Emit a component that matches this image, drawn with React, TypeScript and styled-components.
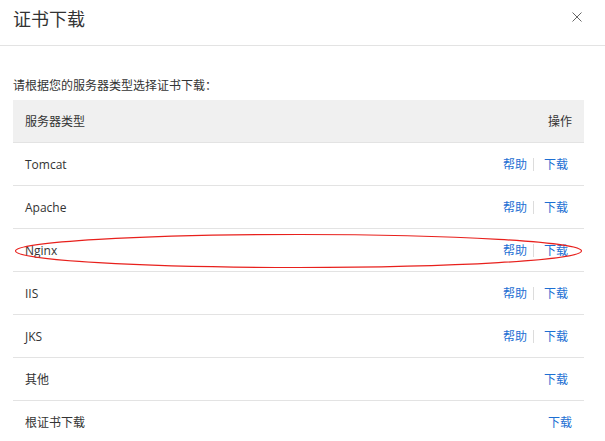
import styled, { createGlobalStyle } from "styled-components";

const GlobalStyle = createGlobalStyle`
  html, body {
    margin: 0;
    padding: 0;
    background: #fff;
    overflow: hidden;
  }
  body {
    font-family: "Open Sans", "Noto Sans CJK SC", sans-serif;
    color: #333;
  }
`

const Dialog = styled.div`
  position: relative;
  width: 605px;
  height: 441px;
  background: #fff;
`

const Header = styled.div`
  display: flex;
  align-items: center;
  justify-content: space-between;
  height: 45px;
  padding: 0 22px 0 13px;
  border-bottom: 1px solid #e3e3e3;
  box-sizing: border-box;
  height: 46px;
`

const Title = styled.h2`
  margin: 0 0 10px 0;
  font-weight: normal;
  font-size: 18px;
  line-height: 24px;
  color: #333;
  font-family: "Noto Sans CJK SC", sans-serif;
`

const Close = styled.button`
  display: flex;
  align-items: center;
  justify-content: center;
  width: 12px;
  height: 12px;
  margin-bottom: 12px;
  padding: 0;
  border: 0;
  background: none;
  cursor: pointer;
`

const Body = styled.div`
  padding: 31px 21px 0 13px;
`

const Hint = styled.p`
  margin: 0 0 5px 0;
  font-size: 12px;
  line-height: 18px;
  color: #333;
`

const Table = styled.div`
  display: flex;
  flex-direction: column;
`

const Row = styled.div<{ $head?: boolean }>`
  display: flex;
  align-items: center;
  justify-content: space-between;
  height: 43px;
  box-sizing: border-box;
  padding: 0 12px;
  border-bottom: 1px solid #e3e3e3;
  background: ${p => (p.$head ? "#f0f0f0" : "#fff")};
  font-size: 12px;
  color: #333;
`

const Actions = styled.div<{ $inset?: boolean }>`
  display: flex;
  align-items: center;
  margin-right: ${p => (p.$inset ? "4px" : "0")};
`

const Link = styled.a`
  color: #1d6fd3;
  text-decoration: none;
  font-size: 12px;
  cursor: pointer;
`

const Sep = styled.span`
  width: 1px;
  height: 13px;
  margin: 0 10px 0 6px;
  background: #dcdcdc;
`

const Mark = styled.svg`
  position: absolute;
  left: 0;
  top: 0;
  pointer-events: none;
`

const servers = ["Tomcat", "Apache", "Nginx", "IIS", "JKS"];

export default function App() {
  return (
    <Dialog>
      <GlobalStyle />
      <Header>
        <Title>证书下载</Title>
        <Close aria-label="close">
          <svg width="10" height="10" viewBox="0 0 10 10">
            <path d="M0.5 0.5L9.5 9.5M9.5 0.5L0.5 9.5" stroke="#666" strokeWidth="1" />
          </svg>
        </Close>
      </Header>
      <Body>
        <Hint>请根据您的服务器类型选择证书下载：</Hint>
        <Table>
          <Row $head>
            <span>服务器类型</span>
            <span>操作</span>
          </Row>
          {servers.map(name => (
            <Row key={name}>
              <span>{name}</span>
              <Actions $inset>
                <Link>帮助</Link>
                <Sep />
                <Link>下载</Link>
              </Actions>
            </Row>
          ))}
          <Row>
            <span>其他</span>
            <Actions $inset>
              <Link>下载</Link>
            </Actions>
          </Row>
          <Row>
            <span>根证书下载</span>
            <Actions>
              <Link>下载</Link>
            </Actions>
          </Row>
        </Table>
      </Body>
      <Mark width="605" height="441">
        <ellipse cx="298.5" cy="251" rx="283" ry="16.5" fill="none" stroke="#e8201c" strokeWidth="1.2" />
      </Mark>
    </Dialog>
  )
}
